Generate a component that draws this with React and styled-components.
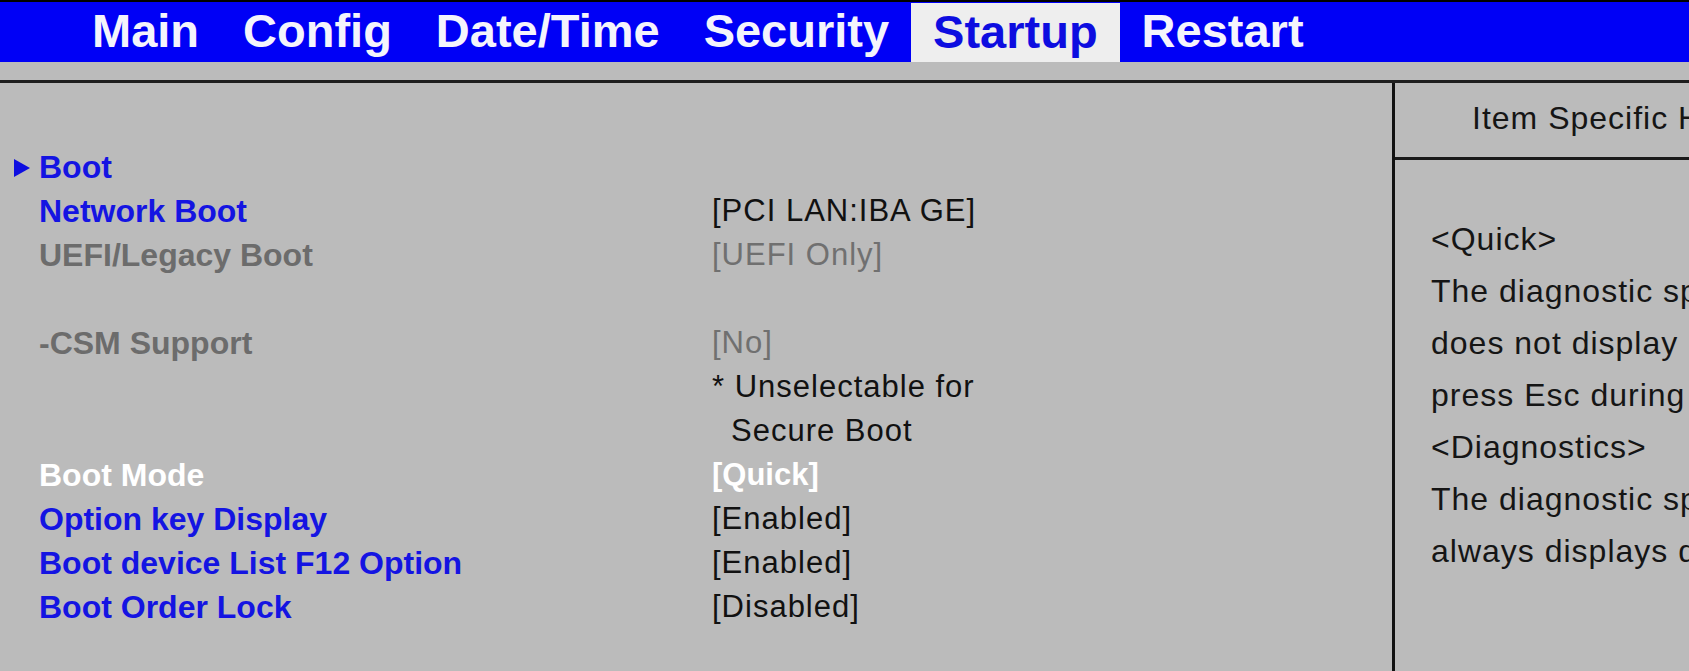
import React from "react";
import styled, { createGlobalStyle } from "styled-components";

const GlobalStyle = createGlobalStyle`
  html, body {
    margin: 0;
    padding: 0;
    background: #bbbbbb;
    overflow: hidden;
  }
  body {
    font-family: "Liberation Sans", Arial, sans-serif;
  }
`;

const Screen = styled.div`
  display: flex;
  flex-direction: column;
  height: 100vh;
  background: #bbbbbb;
`;

const MenuBar = styled.nav`
  display: flex;
  height: 60px;
  padding-left: 70px;
  background: #0000f6;
  border-top: 2px solid #000;
`;

const Tab = styled.div`
  padding: 0 22px 3px;
  font-size: 47px;
  font-weight: bold;
  line-height: 57px;
  color: ${(p) => (p.$active ? "#0d0de0" : "#f4f4fc")};
  background: ${(p) => (p.$active ? "#eeeeee" : "transparent")};
  margin-top: ${(p) => (p.$active ? "1px" : "0")};
`;

const Spacer = styled.div`
  height: 18px;
`;

const Body = styled.div`
  flex: 1;
  display: flex;
  border-top: 3px solid #1e1e1e;
  min-height: 0;
`;

const ItemList = styled.div`
  width: 1392px;
  flex-shrink: 0;
  padding-top: 62px;
`;

const Row = styled.div`
  display: grid;
  grid-template-columns: 39px 673px 1fr;
  height: 44px;
  line-height: 44px;
  white-space: nowrap;
`;

const Marker = styled.span`
  align-self: center;
  justify-self: start;
  width: 0;
  height: 0;
  margin: 1px 0 0 14px;
  border-left: 16px solid #0d0de0;
  border-top: 9px solid transparent;
  border-bottom: 9px solid transparent;
`;

const tones = {
  blue: "#1414e2",
  grey: "#6c6c6c",
  white: "#ffffff",
};

const Label = styled.span`
  grid-column: 2;
  font-size: 32px;
  font-weight: bold;
  color: ${(p) => tones[p.$tone]};
`;

const Value = styled.span`
  grid-column: 3;
  font-size: 31px;
  font-weight: ${(p) => (p.$tone === "white" ? "bold" : "normal")};
  letter-spacing: ${(p) => (p.$tone === "white" ? "0" : "1px")};
  padding-left: ${(p) => (p.$indent ? "19px" : "0")};
  color: ${(p) => (p.$tone === "white" ? "#ffffff" : p.$tone === "grey" ? "#707070" : "#111111")};
`;

const HelpPanel = styled.aside`
  flex: 1;
  min-width: 0;
  overflow: hidden;
  border-left: 3px solid #111;
  white-space: nowrap;
  color: #151515;
  font-size: 32px;
  letter-spacing: 1px;
`;

const HelpHeader = styled.div`
  box-sizing: border-box;
  height: 77px;
  padding: 13px 0 0 77px;
  line-height: 44px;
  border-bottom: 3px solid #1a1a1a;
`;

const HelpBody = styled.div`
  padding: 53px 0 0 36px;
  line-height: 52px;
`;

const tabs = ["Main", "Config", "Date/Time", "Security", "Startup", "Restart"];

const items = [
  { label: "Boot", tone: "blue", submenu: true },
  { label: "Network Boot", tone: "blue", value: "[PCI LAN:IBA GE]" },
  { label: "UEFI/Legacy Boot", tone: "grey", value: "[UEFI Only]" },
  {},
  { label: "-CSM Support", tone: "grey", value: "[No]" },
  { value: "* Unselectable for" },
  { value: "Secure Boot", indent: true },
  { label: "Boot Mode", tone: "white", value: "[Quick]" },
  { label: "Option key Display", tone: "blue", value: "[Enabled]" },
  { label: "Boot device List F12 Option", tone: "blue", value: "[Enabled]" },
  { label: "Boot Order Lock", tone: "blue", value: "[Disabled]" },
];

const helpLines = [
  "<Quick>",
  "The diagnostic splash screen",
  "does not display unless you",
  "press Esc during POST.",
  "<Diagnostics>",
  "The diagnostic splash screen",
  "always displays during POST.",
];

export default function App() {
  return (
    <>
      <GlobalStyle />
      <Screen>
        <MenuBar>
          {tabs.map((t) => (
            <Tab key={t} $active={t === "Startup"}>
              {t}
            </Tab>
          ))}
        </MenuBar>
        <Spacer />
        <Body>
          <ItemList>
            {items.map((item, i) => (
              <Row key={i}>
                {item.submenu ? <Marker /> : <span />}
                {item.label ? <Label $tone={item.tone}>{item.label}</Label> : <span />}
                {item.value && (
                  <Value $tone={item.tone} $indent={item.indent}>
                    {item.value}
                  </Value>
                )}
              </Row>
            ))}
          </ItemList>
          <HelpPanel>
            <HelpHeader>Item Specific Help</HelpHeader>
            <HelpBody>
              {helpLines.map((line, i) => (
                <div key={i}>{line}</div>
              ))}
            </HelpBody>
          </HelpPanel>
        </Body>
      </Screen>
    </>
  );
}
